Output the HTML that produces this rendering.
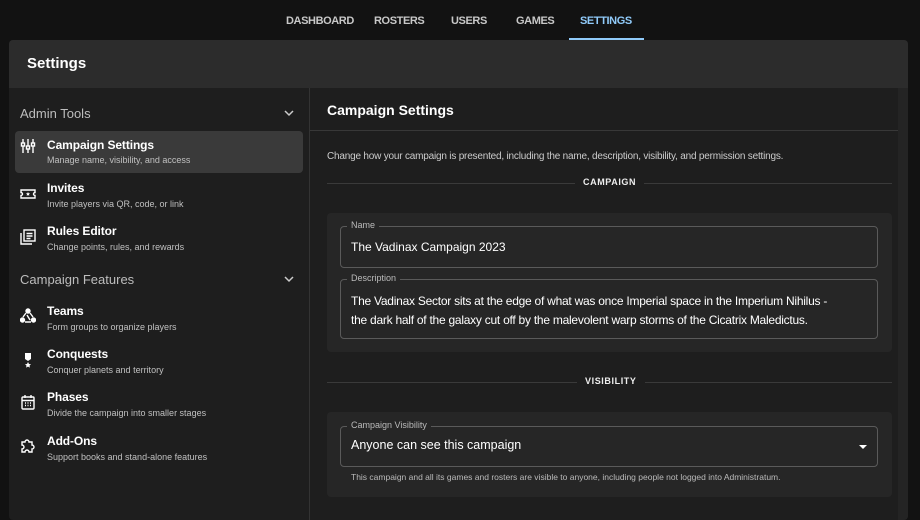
<!DOCTYPE html>
<html><head><style>
*{box-sizing:border-box;margin:0;padding:0}
body{width:920px;height:510px;background:#121212;font-family:"Liberation Sans",sans-serif;color:#fff;position:relative;overflow:hidden}
.abs{position:absolute}
.nav{font-size:11px;font-weight:bold;color:#c8c8c8;top:15px;letter-spacing:-0.4px}
.card{left:9px;top:40px;width:899px;height:480px;background:#1e1e1e;border-radius:4px;overflow:hidden}
.hdr{left:0;top:0;width:899px;height:48px;background:#2c2c2c}
.t{font-size:12px;font-weight:bold;color:#fff;left:38px;letter-spacing:-0.1px}
.s{font-size:9px;color:#c0c0c0;left:38px}
.ic{left:11px;width:16px;height:16px}
.sec{font-size:13px;color:#bdbdbd;left:11px}
.fld{border:1px solid #5a5a5a;border-radius:4px;position:absolute}
.lbl{position:absolute;top:-7px;left:6px;background:#262626;padding:0 4px;font-size:9px;color:#bbb}
.div{height:1px;background:#3a3a3a;position:absolute}
.dl{position:absolute;font-size:9px;font-weight:bold;letter-spacing:0.6px;background:#1e1e1e;padding:0 8px;color:#eee}
</style></head><body>
<div class="abs nav" style="left:286px">DASHBOARD</div>
<div class="abs nav" style="left:374px">ROSTERS</div>
<div class="abs nav" style="left:451px">USERS</div>
<div class="abs nav" style="left:516px">GAMES</div>
<div class="abs nav" style="left:580px;color:#90caf9">SETTINGS</div>
<div class="abs" style="left:569px;top:38px;width:75px;height:2px;background:#90caf9"></div>

<div class="abs card">
<div class="abs hdr"></div>
<div class="abs" style="left:18px;top:15px;font-size:15px;font-weight:bold">Settings</div>
<div class="abs" style="left:300px;top:48px;width:1px;height:440px;background:#333"></div>

<div class="abs sec" style="top:66px">Admin Tools</div>
<svg class="abs" style="left:274px;top:68px" width="12" height="10" viewBox="0 0 12 10"><path d="M2 3l4 4 4-4" stroke="#ccc" stroke-width="1.5" fill="none"/></svg>
<div class="abs" style="left:6px;top:91px;width:288px;height:42px;background:#3a3a3a;border-radius:4px"></div>
<svg class="abs ic" style="top:98px" viewBox="0 0 16 16" fill="none" stroke="#fff" stroke-width="1.4"><path d="M3 1v14M8 1v14M13 1v14"/><rect x="1.5" y="5" width="3" height="3" fill="#3a3a3a"/><rect x="6.5" y="8" width="3" height="3" fill="#3a3a3a"/><rect x="11.5" y="5" width="3" height="3" fill="#3a3a3a"/></svg>
<div class="abs t" style="top:98px">Campaign Settings</div>
<div class="abs s" style="top:115px">Manage name, visibility, and access</div>

<svg class="abs ic" style="top:146px" viewBox="0 0 16 16" fill="none" stroke="#fff" stroke-width="1.4"><path d="M1 4h14v2.5a1.5 1.5 0 0 0 0 3V12H1V9.5a1.5 1.5 0 0 0 0-3z"/><path d="M8 6l.6 1.3 1.4.1-1 1 .3 1.4L8 9.1l-1.3.7.3-1.4-1-1 1.4-.1z" fill="#fff" stroke="none"/></svg>
<div class="abs t" style="top:141px">Invites</div>
<div class="abs s" style="top:159px">Invite players via QR, code, or link</div>

<svg class="abs ic" style="top:189px" viewBox="0 0 16 16" fill="none" stroke="#fff" stroke-width="1.4"><rect x="4" y="1" width="11" height="11"/><path d="M1 4v11h11M6.5 4.5h6M6.5 7h6M6.5 9.5h4"/></svg>
<div class="abs t" style="top:184px">Rules Editor</div>
<div class="abs s" style="top:202px">Change points, rules, and rewards</div>

<div class="abs sec" style="top:232px">Campaign Features</div>
<svg class="abs" style="left:274px;top:234px" width="12" height="10" viewBox="0 0 12 10"><path d="M2 3l4 4 4-4" stroke="#ccc" stroke-width="1.5" fill="none"/></svg>

<svg class="abs ic" style="top:268px" viewBox="0 0 16 16" fill="none" stroke="#fff" stroke-width="1.4"><circle cx="8" cy="3" r="2" fill="#fff"/><circle cx="2.5" cy="12" r="2" fill="#fff"/><circle cx="13.5" cy="12" r="2" fill="#fff"/><path d="M6 5L3 9M10 5l3 4M5 14h6M7 7l3 5"/></svg>
<div class="abs t" style="top:264px">Teams</div>
<div class="abs s" style="top:282px">Form groups to organize players</div>

<svg class="abs ic" style="top:312px" viewBox="0 0 16 16" fill="#fff"><path d="M5 1h6v6L8 9 5 7z"/><path d="M8 10l1 2 2 .2-1.5 1.4.4 2L8 14.6l-1.9 1 .4-2L5 12.2 7 12z"/></svg>
<div class="abs t" style="top:307px">Conquests</div>
<div class="abs s" style="top:325px">Conquer planets and territory</div>

<svg class="abs ic" style="top:354px" viewBox="0 0 16 16" fill="none" stroke="#fff" stroke-width="1.4"><rect x="2" y="3" width="12" height="12" rx="1"/><path d="M2 6.5h12M5 1v3M11 1v3"/><path d="M5 9h1M7.5 9h1M10 9h1M5 11.5h1M7.5 11.5h1M10 11.5h1" stroke-width="1.5"/></svg>
<div class="abs t" style="top:350px">Phases</div>
<div class="abs s" style="top:368px">Divide the campaign into smaller stages</div>

<svg class="abs ic" style="top:398px" viewBox="0 0 16 16" fill="none" stroke="#fff" stroke-width="1.4"><path d="M2 4h3a2 2 0 0 1 4 0h3v3a2 2 0 0 1 0 4v3H9a2 2 0 0 0-4 0H2v-3a2 2 0 0 0 0-4z"/></svg>
<div class="abs t" style="top:394px">Add-Ons</div>
<div class="abs s" style="top:412px">Support books and stand-alone features</div>

<!-- right pane -->
<div class="abs" style="left:889px;top:48px;width:10px;height:440px;background:#242424"></div>
<div class="abs" style="left:318px;top:62px;font-size:14px;font-weight:bold">Campaign Settings</div>
<div class="abs div" style="left:301px;top:90px;width:588px;background:#383838"></div>
<div class="abs" style="left:318px;top:111px;font-size:10px;color:#ccc;letter-spacing:-0.2px">Change how your campaign is presented, including the name, description, visibility, and permission settings.</div>
<div class="abs div" style="left:318px;top:143px;width:565px"></div>
<div class="dl" style="left:566px;top:137px">CAMPAIGN</div>

<div class="abs" style="left:318px;top:173px;width:565px;height:139px;background:#262626;border-radius:4px">
 <div class="fld" style="left:13px;top:13px;width:538px;height:42px"><span class="lbl">Name</span>
  <div class="abs" style="left:10px;top:13px;font-size:12px">The Vadinax Campaign 2023</div></div>
 <div class="fld" style="left:13px;top:66px;width:538px;height:60px"><span class="lbl">Description</span>
  <div class="abs" style="left:10px;top:12px;font-size:12px;line-height:19px;width:528px;letter-spacing:-0.25px;white-space:nowrap">The Vadinax Sector sits at the edge of what was once Imperial space in the Imperium Nihilus -<br>the dark half of the galaxy cut off by the malevolent warp storms of the Cicatrix Maledictus.</div></div>
</div>

<div class="abs div" style="left:318px;top:342px;width:565px"></div>
<div class="dl" style="left:568px;top:336px">VISIBILITY</div>

<div class="abs" style="left:318px;top:372px;width:565px;height:85px;background:#262626;border-radius:4px">
 <div class="fld" style="left:13px;top:14px;width:538px;height:41px"><span class="lbl">Campaign Visibility</span>
  <div class="abs" style="left:10px;top:11px;font-size:12.5px">Anyone can see this campaign</div>
  <div class="abs" style="left:518px;top:18px;width:0;height:0;border-left:4px solid transparent;border-right:4px solid transparent;border-top:4px solid #fff"></div></div>
 <div class="abs" style="left:24px;top:60px;font-size:8.5px;color:#bbb">This campaign and all its games and rosters are visible to anyone, including people not logged into Administratum.</div>
</div>
</div>
</body></html>
